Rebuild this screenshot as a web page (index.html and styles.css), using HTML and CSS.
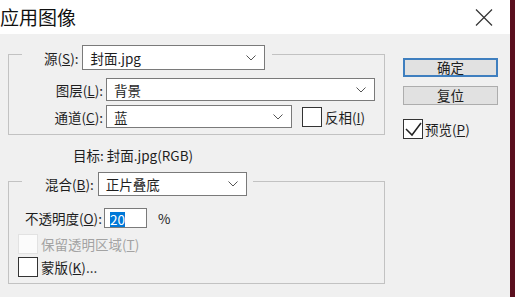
FILE: index.html
```html
<!DOCTYPE html>
<html lang="zh-CN">
<head>
    <meta charset="UTF-8">
    <meta name="viewport" content="width=device-width, initial-scale=1.0">
    <title>应用图像</title>
    <link rel="stylesheet" href="styles.css">
</head>
<body>
    <div class="dialog">
        <header class="titlebar">
            <h1 class="title">应用图像</h1>
            <svg class="close" width="18" height="17" viewBox="0 0 18 17">
                <path d="M1 0.5 L17 16.5 M17 0.5 L1 16.5" stroke="#333" stroke-width="1.2" fill="none"/>
            </svg>
        </header>

        <div class="content">
            <div class="main">
                <fieldset class="group group-source">
                    <legend class="legend">
                        <div class="legend-row">
                            <span class="label">源(<u>S</u>):</span>
                            <div class="select select-source">
                                <span>封面.jpg</span>
                                <svg class="chevron" width="10" height="6" viewBox="0 0 10 6"><polyline points="0.5,0.5 5,5 9.5,0.5" fill="none" stroke="#555" stroke-width="1"/></svg>
                            </div>
                        </div>
                    </legend>
                    <div class="rows">
                        <span class="label">图层(<u>L</u>):</span>
                        <div class="select select-layer">
                            <span>背景</span>
                            <svg class="chevron" width="10" height="6" viewBox="0 0 10 6"><polyline points="0.5,0.5 5,5 9.5,0.5" fill="none" stroke="#555" stroke-width="1"/></svg>
                        </div>
                        <span class="label">通道(<u>C</u>):</span>
                        <div class="channel">
                            <div class="select select-channel">
                                <span>蓝</span>
                                <svg class="chevron" width="10" height="6" viewBox="0 0 10 6"><polyline points="0.5,0.5 5,5 9.5,0.5" fill="none" stroke="#555" stroke-width="1"/></svg>
                            </div>
                            <label class="check">
                                <span class="box"></span>
                                <span>反相(<u>I</u>)</span>
                            </label>
                        </div>
                    </div>
                </fieldset>

                <p class="target">目标: 封面.jpg(RGB)</p>

                <fieldset class="group group-blend">
                    <legend class="legend">
                        <div class="legend-row">
                            <span class="label">混合(<u>B</u>):</span>
                            <div class="select select-blend">
                                <span>正片叠底</span>
                                <svg class="chevron" width="10" height="6" viewBox="0 0 10 6"><polyline points="0.5,0.5 5,5 9.5,0.5" fill="none" stroke="#555" stroke-width="1"/></svg>
                            </div>
                        </div>
                    </legend>
                    <div class="opacity">
                        <span class="label">不透明度(<u>O</u>):</span>
                        <div class="field"><span class="selected">20</span></div>
                        <span class="unit">%</span>
                    </div>
                    <div class="checks">
                        <label class="check disabled">
                            <span class="box"></span>
                            <span>保留透明区域(<u>T</u>)</span>
                        </label>
                        <label class="check">
                            <span class="box"></span>
                            <span>蒙版(<u>K</u>)...</span>
                        </label>
                    </div>
                </fieldset>
            </div>

            <aside class="actions">
                <button class="btn btn-default">确定</button>
                <button class="btn">复位</button>
                <label class="check check-preview">
                    <span class="box">
                        <svg width="18" height="18" viewBox="0 0 18 18"><polyline points="2,9 8,15 17,3" fill="none" stroke="#222" stroke-width="1.5"/></svg>
                    </span>
                    <span>预览(<u>P</u>)</span>
                </label>
            </aside>
        </div>
    </div>
</body>
</html>
```

FILE: styles.css
```css
body {
    margin: 0;
    font-family: "Noto Sans CJK SC", "Noto Sans", sans-serif;
    font-size: 13.5px;
    line-height: 18px;
    color: #1e1e1e;
    background-color: #f0f0f0;
}
.dialog {
    width: 515px;
    height: 297px;
    box-sizing: border-box;
    border-right: 5px solid #5a0f1e;
    background-color: #f0f0f0;
    overflow: hidden;
}
.titlebar {
    height: 34px;
    background-color: #fff;
    display: flex;
    align-items: center;
    justify-content: space-between;
    padding-right: 17px;
}
.title {
    margin: 0;
    font-size: 19px;
    font-weight: normal;
    line-height: 24px;
    color: #111;
}
.content {
    display: flex;
    align-items: flex-start;
}
.main {
    width: 377px;
    margin-left: 8px;
}
.group {
    margin: 0;
    padding: 0;
    min-width: 0;
    border: 1px solid #c2c2c2;
}
.group-source {
    margin-top: 4px;
}
.group-blend {
    margin-top: 2px;
}
.legend {
    margin-left: 13px;
    padding: 7px 7px 0 22px;
}
.group-blend .legend {
    padding: 6px 6px 0 23px;
}
.legend-row {
    display: flex;
    align-items: center;
    gap: 4px;
}
.select {
    display: flex;
    align-items: center;
    justify-content: space-between;
    box-sizing: border-box;
    height: 23px;
    padding: 0 8px 0 7px;
    border: 1px solid #7a7a7a;
    background-color: #fff;
}
.select-source {
    width: 183px;
    height: 25px;
}
.select-layer {
    width: 269px;
}
.select-channel {
    width: 186px;
}
.select-blend {
    width: 149px;
    height: 24px;
}
.rows {
    display: grid;
    grid-template-columns: 94px 269px;
    column-gap: 3px;
    row-gap: 4px;
    align-items: center;
    margin-top: 8px;
    padding-bottom: 6px;
}
.rows .label {
    text-align: right;
}
.channel {
    display: flex;
    align-items: center;
    gap: 10px;
}
.check {
    display: flex;
    align-items: center;
    gap: 3px;
}
.box {
    display: flex;
    align-items: center;
    justify-content: center;
    box-sizing: border-box;
    width: 20px;
    height: 20px;
    border: 1px solid #333;
    background-color: #fff;
}
.check.disabled {
    color: #a3a3a3;
}
.check.disabled .box {
    border-color: #e2e2e2;
    background-color: #fbfbfb;
}
.target {
    margin: 0;
    padding: 11px 0 0 65px;
}
.opacity {
    display: flex;
    align-items: center;
    gap: 2px;
    margin-top: 12px;
    padding-left: 16px;
}
.field {
    box-sizing: border-box;
    width: 43px;
    height: 20px;
    padding: 1px 0 0 5px;
    border: 1px solid #7a7a7a;
    background-color: #fff;
}
.selected {
    display: inline-block;
    line-height: 15px;
    background-color: #0078d7;
    color: #fff;
}
.unit {
    margin-left: 9px;
}
.checks {
    display: flex;
    flex-direction: column;
    gap: 3px;
    margin-top: 6px;
    padding: 0 0 6px 9px;
}
.actions {
    width: 95px;
    margin: 24px 0 0 18px;
    display: flex;
    flex-direction: column;
    gap: 9px;
}
.btn {
    box-sizing: border-box;
    height: 19px;
    padding: 0;
    border: 1px solid #adadad;
    background-color: #e1e1e1;
    font-family: inherit;
    font-size: 13.5px;
    line-height: 15px;
    color: #1e1e1e;
}
.btn-default {
    border: 2px solid #3f7fbf;
}
.check-preview {
    margin-top: 5px;
    gap: 2px;
}
```
